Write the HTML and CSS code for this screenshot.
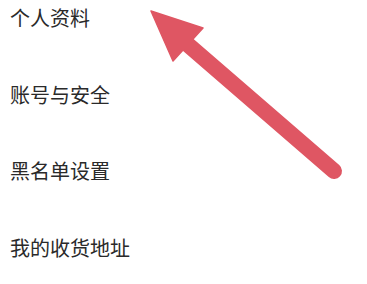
FILE: index.html
```html
<!DOCTYPE html>
<html lang="zh">
<head>
<meta charset="utf-8">
<link rel="stylesheet" href="styles.css">
</head>
<body>
<div class="page">
  <ul class="menu">
    <li class="item">个人资料</li>
    <li class="item">账号与安全</li>
    <li class="item">黑名单设置</li>
    <li class="item">我的收货地址</li>
  </ul>
  <svg class="arrow" width="367" height="284" viewBox="0 0 367 284">
    <line x1="186" y1="43" x2="334" y2="171" stroke="#df5663" stroke-width="16" stroke-linecap="round"/>
    <polygon points="151,11 203,28 173,61" fill="#df5663" stroke="#df5663" stroke-width="1.5" stroke-linejoin="round"/>
  </svg>
</div>
</body>
</html>
```
FILE: styles.css
```css
html, body {
  margin: 0;
  padding: 0;
  background: #ffffff;
}
.page {
  position: relative;
  width: 367px;
  height: 284px;
  overflow: hidden;
}
.menu {
  list-style: none;
  margin: 0;
  padding: 8px 0 0 10px;
  display: flex;
  flex-direction: column;
  gap: 56.7px;
}
.item {
  font-family: "Noto Sans CJK SC", "Noto Sans", sans-serif;
  font-size: 20px;
  line-height: 20px;
  color: #2a2a2a;
}
.arrow {
  position: absolute;
  left: 0;
  top: 0;
}
```
